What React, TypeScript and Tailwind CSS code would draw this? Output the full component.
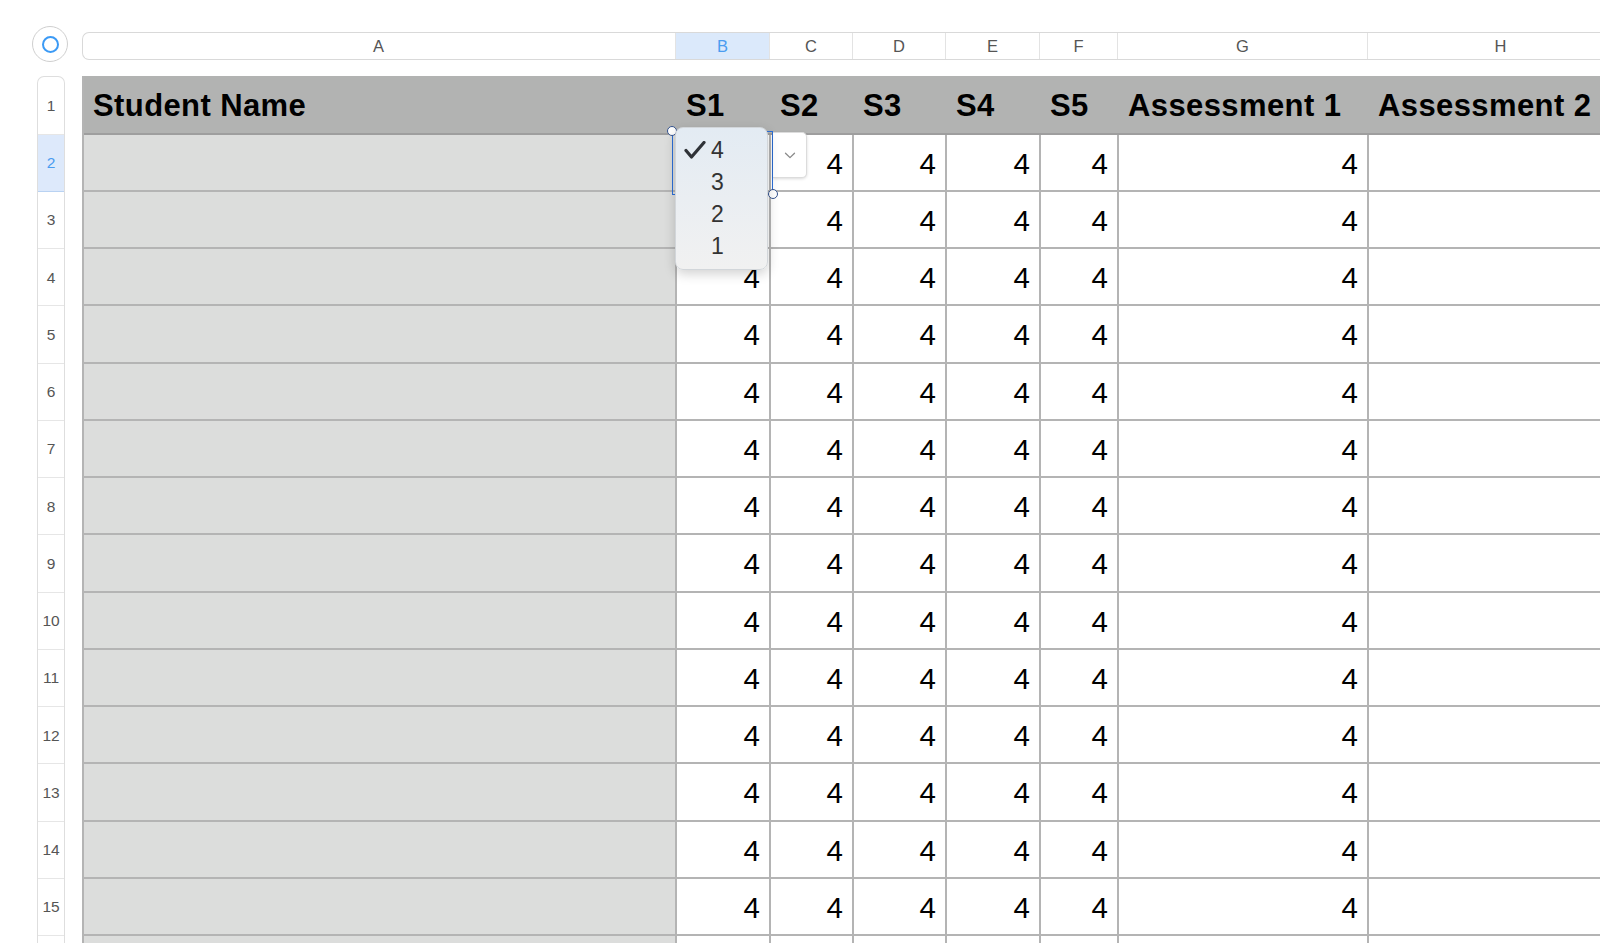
import React from "react";

const columns = [
  { key: "A", width: "w-[593px]", title: "Student Name" },
  { key: "B", width: "w-[94px]", title: "S1" },
  { key: "C", width: "w-[83px]", title: "S2" },
  { key: "D", width: "w-[93px]", title: "S3" },
  { key: "E", width: "w-[94px]", title: "S4" },
  { key: "F", width: "w-[78px]", title: "S5" },
  { key: "G", width: "w-[250px]", title: "Assessment 1" },
  { key: "H", width: "w-[266px]", title: "Assessment 2" },
];

const rowNumbers = Array.from({ length: 16 }, (_, i) => i + 1);
const dataRows = Array.from({ length: 15 }, (_, i) => i + 2);

function CheckIcon() {
  return (
    <svg width="22" height="18" viewBox="0 0 22 18" fill="none">
      <path d="M2 9.5 L7.5 16 L20 1.5" stroke="#2f3237" strokeWidth="3.2" strokeLinecap="round" strokeLinejoin="round" />
    </svg>
  );
}

function Chevron() {
  return (
    <svg width="12" height="7" viewBox="0 0 12 7" fill="none">
      <path d="M1.5 1.2 L6 5.6 L10.5 1.2" stroke="#8a8a8a" strokeWidth="1.3" strokeLinecap="round" strokeLinejoin="round" />
    </svg>
  );
}

export default function App() {
  return (
    <div className="relative h-[943px] w-[1600px] overflow-hidden bg-white font-['Liberation_Sans',Arial,sans-serif]">
      {/* Column letters */}
      <div className="flex items-start pt-[26px]">
        <div className="w-[82px] shrink-0 pl-[32px]">
          <div className="flex h-[36px] w-[36px] items-center justify-center rounded-full border border-[#cfcfcf] bg-white">
            <div className="h-[17px] w-[17px] rounded-full border-2 border-[#3b9af5]" />
          </div>
        </div>
        <div className="mt-[6px] flex h-[28px] flex-1 rounded-l-[7px] border border-r-0 border-[#d9d9d9] bg-white">
          {columns.map((c, i) => (
            <div
              key={c.key}
              className={`${c.width} flex shrink-0 items-center justify-center text-[16.5px] ${i === 0 ? "-ml-px" : "border-l border-[#e3e3e3]"} ${c.key === "B" ? "bg-[#dbe9fb] text-[#4a9cf0]" : "text-[#555]"}`}
            >
              {c.key}
            </div>
          ))}
        </div>
      </div>

      <div className="mt-[14px] flex">
        {/* Row numbers */}
        <div className="ml-[37px] w-[28px] shrink-0 overflow-hidden rounded-t-[7px] border-x border-t border-[#dedede]">
          {rowNumbers.map((n) => (
            <div
              key={n}
              className={`flex items-center justify-center border-b text-[15.5px] ${n === 1 ? "h-[57.5px]" : "h-[57.25px]"} ${n === 2 ? "border-[#b9d2f2] bg-[#dde9fb] text-[#4a9cf0]" : "border-[#e6e6e6] text-[#555]"}`}
            >
              {n === 16 ? "" : n}
            </div>
          ))}
        </div>

        {/* Table */}
        <div className="ml-[17px] border-l-2 border-[#b4b4b4]">
          <div className="flex h-[58.5px] border-b-2 border-[#9e9e9e] bg-[#b2b3b2] pt-[3px]">
            {columns.map((c) => (
              <div
                key={c.key}
                className={`${c.width} flex shrink-0 items-center pl-[9px] text-[31px] font-bold tracking-[0.4px] text-black`}
              >
                {c.title}
              </div>
            ))}
          </div>
          {dataRows.map((r) => (
            <div key={r} className="flex h-[57.25px] border-b-2 border-[#b4b4b4]">
              {columns.map((c) => (
                <div
                  key={c.key}
                  className={`${c.width} flex shrink-0 items-center justify-end border-r-2 border-[#b4b4b4] pr-[9px] pt-[3px] text-[29.5px] text-black ${c.key === "A" ? "bg-[#dcdddc]" : "bg-white"}`}
                >
                  {c.key === "A" || c.key === "H" || r === 16 ? "" : "4"}
                </div>
              ))}
            </div>
          ))}
        </div>
      </div>

      {/* Cell selection on B2 */}
      <div className="absolute left-[672px] top-[131px] h-[64px] w-[101px] border-[1.5px] border-[#2c6fd8]" />
      <div className="absolute left-[667px] top-[126px] h-[10px] w-[10px] rounded-full border-[1.5px] border-[#34538f] bg-white" />
      <div className="absolute left-[768px] top-[189px] h-[10px] w-[10px] rounded-full border-[1.5px] border-[#34538f] bg-white" />

      {/* Popup button */}
      <div className="absolute left-[773px] top-[132px] flex h-[46px] w-[34px] items-center justify-center rounded-r-[5px] border border-l-0 border-[#dcdcdc] bg-white shadow-[0_1px_3px_rgba(0,0,0,0.15)]">
        <Chevron />
      </div>

      {/* Popup menu */}
      <div className="absolute left-[675px] top-[127px] h-[143px] w-[93px] rounded-[8px] border border-[#d2d6da] bg-gradient-to-b from-[#e3ebf3] to-[#f1f1f1] pt-[6px] shadow-[0_4px_12px_rgba(0,0,0,0.18)]">
        {["4", "3", "2", "1"].map((v, i) => (
          <div key={v} className="flex h-[32px] items-center text-[23px] text-[#333]">
            <div className="flex w-[35px] shrink-0 pl-[8px]">{i === 0 ? <CheckIcon /> : null}</div>
            <span>{v}</span>
          </div>
        ))}
      </div>
    </div>
  );
}
